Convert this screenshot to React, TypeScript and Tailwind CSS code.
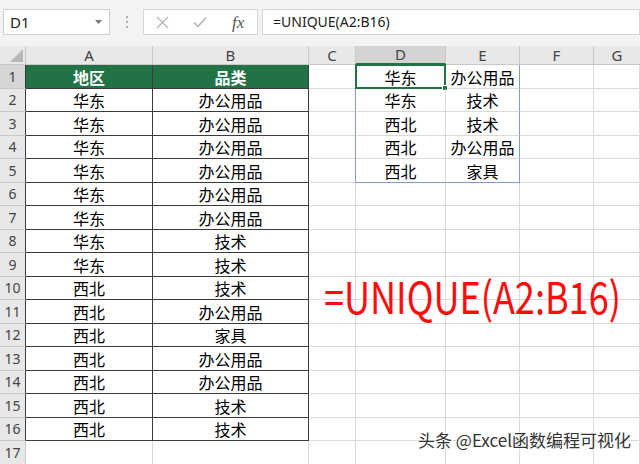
import React from 'react';

const DATA: [string, string][] = [
  ['华东', '办公用品'],
  ['华东', '办公用品'],
  ['华东', '办公用品'],
  ['华东', '办公用品'],
  ['华东', '办公用品'],
  ['华东', '办公用品'],
  ['华东', '技术'],
  ['华东', '技术'],
  ['西北', '技术'],
  ['西北', '办公用品'],
  ['西北', '家具'],
  ['西北', '办公用品'],
  ['西北', '办公用品'],
  ['西北', '技术'],
  ['西北', '技术'],
];

const SPILL: [string, string][] = [
  ['华东', '办公用品'],
  ['华东', '技术'],
  ['西北', '技术'],
  ['西北', '办公用品'],
  ['西北', '家具'],
];

const GRID = 'border-r border-b border-[#dadada]';

function Row({ n }: { n: number }) {
  const inTable = n <= 16;
  const inSpill = n <= 5;
  const a = n === 1 ? '地区' : inTable ? DATA[n - 2][0] : '';
  const b = n === 1 ? '品类' : inTable ? DATA[n - 2][1] : '';
  const d = inSpill ? SPILL[n - 1][0] : '';
  const e = inSpill ? SPILL[n - 1][1] : '';

  const tableCls = n === 1
    ? 'border-r border-b border-[#3b3b3b] bg-[#217346] text-white font-bold'
    : inTable
      ? 'border-r border-b border-[#3b3b3b]'
      : GRID;

  const cCls = inSpill ? 'border-r border-r-[#7f9cd6] border-b border-b-[#dadada]' : GRID;
  const dCls = n === 5
    ? 'border-r border-r-[#dadada] border-b border-b-[#7f9cd6]'
    : GRID;
  const eCls = n === 5
    ? 'border-r border-b border-[#7f9cd6]'
    : inSpill
      ? 'border-r border-r-[#7f9cd6] border-b border-b-[#dadada]'
      : GRID;

  const h = n % 2 === 1 ? 'h-[24px]' : 'h-[23px]';

  return (
    <div className={`flex shrink-0 ${h}`}>
      <div
        className={`w-[26px] shrink-0 flex items-center justify-center border-b border-[#c8c8c8] text-[14px] text-[#444] font-['Noto_Sans',sans-serif] ${
          inTable ? 'border-r border-r-[#3b3b3b]' : 'border-r border-r-[#c8c8c8]'
        } ${n === 1 ? 'bg-[#d6d6d6]' : 'bg-[#e8e8e8]'}`}
      >
        {n}
      </div>
      <div className={`w-[127px] shrink-0 flex items-center justify-center ${tableCls}`}>{a}</div>
      <div className={`w-[156px] shrink-0 flex items-center justify-center ${tableCls}`}>{b}</div>
      <div className={`w-[47px] shrink-0 ${cCls}`} />
      <div className={`relative w-[90px] shrink-0 flex items-center justify-center ${dCls}`}>
        {d}
        {n === 1 && (
          <div className="absolute -left-[1px] -top-[1px] w-[91px] h-[25px] border-2 border-[#217346]">
            <div className="absolute -right-[4px] -bottom-[4px] w-[6px] h-[6px] bg-[#217346] border border-white" />
          </div>
        )}
      </div>
      <div className={`w-[74px] shrink-0 flex items-center justify-center ${eCls}`}>{e}</div>
      <div className={`w-[74px] shrink-0 ${GRID}`} />
      <div className={`flex-1 ${GRID}`} />
    </div>
  );
}

export default function App() {
  const rows = Array.from({ length: 17 }, (_, i) => i + 1);
  return (
    <div className="relative w-[640px] h-[464px] overflow-hidden bg-white flex flex-col text-[16px] text-black font-['Noto_Sans_CJK_SC',sans-serif] leading-none">
      {/* toolbar */}
      <div className="h-[46px] shrink-0 bg-[#f3f3f3] flex items-start pt-[9px] pl-[3px]">
        <div className="w-[107px] h-[26px] bg-white border border-[#cfcfcf] flex items-center justify-between pl-[6px] pr-[7px]">
          <span className="text-[15px] text-[#222] font-['Noto_Sans',sans-serif]">D1</span>
          <svg width="7" height="4" viewBox="0 0 7 4"><path d="M0 0h7L3.5 4z" fill="#777" /></svg>
        </div>
        <div className="w-[33px] h-[26px] flex flex-col items-center justify-center gap-[3px]">
          <div className="w-[2px] h-[2px] bg-[#b0b0b0]" />
          <div className="w-[2px] h-[2px] bg-[#b0b0b0]" />
          <div className="w-[2px] h-[2px] bg-[#b0b0b0]" />
        </div>
        <div className="w-[115px] h-[26px] bg-white border border-[#d6d6d6] flex items-center">
          <svg className="ml-[12px]" width="13" height="13" viewBox="0 0 13 13">
            <path d="M1 1l11 11M12 1L1 12" stroke="#b5b5b5" strokeWidth="1.3" />
          </svg>
          <svg className="ml-[24px]" width="14" height="12" viewBox="0 0 14 12">
            <path d="M1 6.5l4 4L13 1.5" stroke="#b5b5b5" strokeWidth="1.6" fill="none" />
          </svg>
          <span className="ml-[25px] text-[17px] italic text-[#555] font-['Liberation_Serif',serif]">fx</span>
        </div>
        <div className="ml-[4px] flex-1 h-[26px] bg-white border border-[#d6d6d6] flex items-center pl-[10px]">
          <span className="text-[14px] text-[#222] font-['Noto_Sans',sans-serif]">=UNIQUE(A2:B16)</span>
        </div>
      </div>

      {/* column headers */}
      <div className="flex shrink-0 h-[19px] bg-[#e8e8e8] text-[15px] text-[#444] font-['Noto_Sans',sans-serif]">
        <div className="relative w-[26px] shrink-0 border-r border-b border-[#c8c8c8]">
          <svg className="absolute right-[2px] bottom-[2px]" width="13" height="13" viewBox="0 0 13 13">
            <path d="M13 0V13H0z" fill="#b8b8b8" />
          </svg>
        </div>
        <div className="w-[127px] shrink-0 flex items-center justify-center border-r border-b border-[#c8c8c8]">A</div>
        <div className="w-[156px] shrink-0 flex items-center justify-center border-r border-b border-[#c8c8c8]">B</div>
        <div className="w-[47px] shrink-0 flex items-center justify-center border-r border-b border-[#c8c8c8]">C</div>
        <div className="w-[90px] shrink-0 flex items-center justify-center border-r border-[#c8c8c8] border-b-2 border-b-[#217346] bg-[#d4d4d4]">D</div>
        <div className="w-[74px] shrink-0 flex items-center justify-center border-r border-b border-[#c8c8c8]">E</div>
        <div className="w-[74px] shrink-0 flex items-center justify-center border-r border-b border-[#c8c8c8]">F</div>
        <div className="flex-1 flex items-center justify-center border-b border-[#c8c8c8]">G</div>
      </div>

      {rows.map((n) => (
        <Row key={n} n={n} />
      ))}

      <div className="absolute left-[324px] top-[273px] origin-left scale-x-[0.82] text-[44px] text-[#fb0d0d] font-['Noto_Sans_CJK_SC',sans-serif] leading-none whitespace-nowrap">
        =UNIQUE(A2:B16)
      </div>

      <div className="absolute left-[418px] top-[431px] text-[17px] text-[#333] font-['Noto_Sans_CJK_SC',sans-serif] leading-none [text-shadow:0_0_2px_#fff,0_0_2px_#fff,0_0_3px_#fff]">
        头条 @Excel函数编程可视化
      </div>
    </div>
  );
}
